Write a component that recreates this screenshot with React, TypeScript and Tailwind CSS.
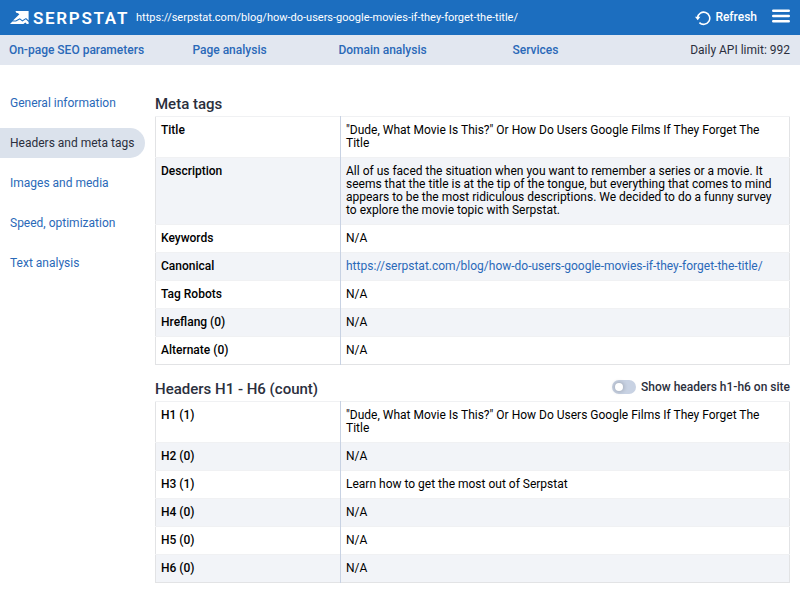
import React from 'react';

interface Row {
  label: string;
  value: string;
  href?: string;
}

const pageUrl =
  'https://serpstat.com/blog/how-do-users-google-movies-if-they-forget-the-title/';

const pageTitle =
  '"Dude, What Movie Is This?" Or How Do Users Google Films If They Forget The Title';

const tabs = ['On-page SEO parameters', 'Page analysis', 'Domain analysis', 'Services'];

const sections = [
  'General information',
  'Headers and meta tags',
  'Images and media',
  'Speed, optimization',
  'Text analysis'
];

const metaTags: Row[] = [
  { label: 'Title', value: pageTitle },
  {
    label: 'Description',
    value:
      'All of us faced the situation when you want to remember a series or a movie. It seems that the title is at the tip of the tongue, but everything that comes to mind appears to be the most ridiculous descriptions. We decided to do a funny survey to explore the movie topic with Serpstat.'
  },
  { label: 'Keywords', value: 'N/A' },
  { label: 'Canonical', value: pageUrl, href: pageUrl },
  { label: 'Tag Robots', value: 'N/A' },
  { label: 'Hreflang (0)', value: 'N/A' },
  { label: 'Alternate (0)', value: 'N/A' }
];

const headers: Row[] = [
  { label: 'H1 (1)', value: pageTitle },
  { label: 'H2 (0)', value: 'N/A' },
  { label: 'H3 (1)', value: 'Learn how to get the most out of Serpstat' },
  { label: 'H4 (0)', value: 'N/A' },
  { label: 'H5 (0)', value: 'N/A' },
  { label: 'H6 (0)', value: 'N/A' }
];

function Logo() {
  return (
    <a href="#" className="flex items-center gap-1">
      <svg className="h-[13px] w-[19px]" viewBox="0 0 19 13" fill="currentColor">
        <path d="M5.4 0H18.6V9.6L16 7L12.4 9.2L9.8 7.2L5.6 9.6H3L9.4 3.2L7.6 2H6.6Z" />
        <path d="M0 13L2.4 10.6H6L9.8 8.4L12.4 10.4L15.8 8.2L18.6 11V13H16.8L15.4 11.6L13.4 13Z" />
      </svg>
      <span className="text-[17px] leading-5 font-semibold tracking-widest">SERPSTAT</span>
    </a>
  );
}

function DataTable({ label, rows }: { label: string; rows: Row[] }) {
  return (
    <table
      aria-label={label}
      className="w-full table-fixed border-collapse border border-[#e2e3e5] text-black"
    >
      <colgroup>
        <col className="w-[185px]" />
        <col />
      </colgroup>
      <tbody>
        {rows.map((row) => (
          <tr key={row.label} className="border-t border-[#f0f1f3] even:bg-[#f2f4f8]">
            <th
              scope="row"
              className="border-r border-r-[#c8d2e3] px-[5px] py-[7px] text-left align-top font-medium"
            >
              {row.label}
            </th>
            <td className="px-[5px] py-[7px] align-top">
              {row.href ? (
                <a href={row.href} className="text-[#2a69b8]">
                  {row.value}
                </a>
              ) : (
                row.value
              )}
            </td>
          </tr>
        ))}
      </tbody>
    </table>
  );
}

export default function App() {
  return (
    <div className="min-h-screen bg-white font-['Roboto',sans-serif] text-[12px] leading-[13px] text-[#2b2f3d]">
      <header className="flex h-[35px] items-center bg-[#1c6ebf] px-[10px] text-white">
        <Logo />
        <span className="ml-[7px] min-w-0 flex-1 truncate text-[11px]">{pageUrl}</span>
        <button className="flex items-center gap-1 font-medium">
          <svg
            className="h-4 w-4"
            viewBox="0 0 16 16"
            fill="none"
            stroke="currentColor"
            strokeWidth="1.6"
          >
            <path d="M2.6 7.6A6.1 6.1 0 1 1 4.4 12.6" />
            <path d="M0 6.8H5.4L2.7 10.2Z" fill="currentColor" stroke="none" />
          </svg>
          Refresh
        </button>
        <button aria-label="Menu" className="ml-[15px] pb-[3px]">
          <svg
            className="h-[14px] w-[18px]"
            viewBox="0 0 18 14"
            stroke="currentColor"
            strokeWidth="2.4"
            strokeLinecap="round"
          >
            <path d="M1.2 1.8H16.8M1.2 7H16.8M1.2 12.2H16.8" />
          </svg>
        </button>
      </header>

      <div className="flex h-[30px] items-center bg-[#e2e7f0]">
        <nav className="grid flex-1 grid-cols-4 text-center font-medium text-[#2a69b8]">
          {tabs.map((tab) => (
            <a key={tab} href="#">
              {tab}
            </a>
          ))}
        </nav>
        <span className="w-[188px] pr-[10px] text-right">Daily API limit: 992</span>
      </div>

      <div className="flex">
        <aside className="w-[155px] shrink-0 pt-[23px]">
          <ul className="flex flex-col gap-[10px]">
            {sections.map((section) => (
              <li key={section}>
                <a
                  href="#"
                  className={
                    section === 'Headers and meta tags'
                      ? 'mr-[10px] flex h-[30px] items-center rounded-r-full bg-[#dbe2ec] pl-[10px] text-[#2b2f3d]'
                      : 'mr-[10px] flex h-[30px] items-center pl-[10px] text-[#2a69b8]'
                  }
                >
                  {section}
                </a>
              </li>
            ))}
          </ul>
        </aside>

        <main className="min-w-0 flex-1 pt-[30px] pr-[10px] pb-4">
          <h2 className="mb-[3px] text-[15px] leading-[18px] font-medium">Meta tags</h2>
          <DataTable label="Meta tags" rows={metaTags} />

          <div className="mt-[15px] mb-[3px] flex items-start justify-between">
            <h2 className="text-[15px] leading-[18px] font-medium">Headers H1 - H6 (count)</h2>
            <label className="flex items-center gap-[5px] font-medium">
              <input
                type="checkbox"
                role="switch"
                className="h-[14px] w-6 appearance-none rounded-full bg-[#c8d2e3] p-[3px] before:block before:h-2 before:w-2 before:rounded-full before:bg-white before:shadow-[0_0_4px_1px_rgba(0,0,0,0.2)] checked:bg-[#1c6ebf] checked:before:ml-auto"
              />
              Show headers h1-h6 on site
            </label>
          </div>
          <DataTable label="Headers H1 - H6" rows={headers} />
        </main>
      </div>
    </div>
  );
}
